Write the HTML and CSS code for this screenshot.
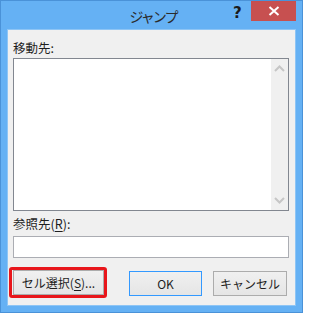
FILE: index.html
```html
<!DOCTYPE html>
<html lang="ja">
<head>
<meta charset="utf-8">
<link rel="stylesheet" href="styles.css">
</head>
<body>
<div class="window">
  <div class="titlebar">
    <div class="title">ジャンプ</div>
    <div class="help">?</div>
    <div class="close">
      <svg width="12" height="10" viewBox="0 0 12 10"><path d="M1.5 1 L10.5 9 M10.5 1 L1.5 9" stroke="#fff" stroke-width="2" fill="none"/></svg>
    </div>
  </div>
  <div class="content">
    <div class="label">移動先:</div>
    <div class="list">
      <div class="scroll">
        <svg width="11" height="7" viewBox="0 0 11 7"><path d="M1 6 L5.5 1.5 L10 6" stroke="#c6c6c6" stroke-width="2" fill="none"/></svg>
        <svg width="11" height="7" viewBox="0 0 11 7"><path d="M1 1 L5.5 5.5 L10 1" stroke="#c6c6c6" stroke-width="2" fill="none"/></svg>
      </div>
    </div>
    <div class="label label2">参照先(<u>R</u>):</div>
    <div class="textbox"></div>
    <div class="buttons">
      <div class="btn btn-cell">セル選択(<u>S</u>)...<span class="highlight"></span></div>
      <div class="btn btn-ok">OK</div>
      <div class="btn btn-cancel">キャンセル</div>
    </div>
  </div>
</div>
</body>
</html>
```
FILE: styles.css
```css
html, body {
  margin: 0;
  padding: 0;
}
body {
  font-family: "Noto Sans CJK JP", "Noto Sans", sans-serif;
  font-size: 12px;
  color: #1e1e1e;
}
.window {
  width: 303px;
  height: 313px;
  box-sizing: border-box;
  background: #65b1f4;
  border: 1px solid #4a92d8;
  display: flex;
  flex-direction: column;
}
.titlebar {
  height: 28px;
  position: relative;
  display: flex;
  align-items: center;
  justify-content: center;
}
.title {
  font-size: 14px;
  letter-spacing: -2px;
  color: #2b2b2b;
  margin-top: 1px;
  margin-left: 3px;
}
.help {
  position: absolute;
  left: 232px;
  top: 3px;
  font-family: "DejaVu Sans", sans-serif;
  font-weight: bold;
  font-size: 15px;
  color: #1b1b1b;
}
.close {
  position: absolute;
  left: 250px;
  top: 0;
  width: 45px;
  height: 20px;
  background: #c75050;
  display: flex;
  align-items: center;
  justify-content: center;
}
.content {
  margin: 0 6px 6px 6px;
  flex: 1;
  background: #f0f0f0;
  border: 1px solid #8ec5f5;
  box-sizing: border-box;
  padding: 7px 6px 0 5px;
  display: flex;
  flex-direction: column;
}
.label {
  height: 21px;
  line-height: 21px;
  font-size: 12.5px;
}
.list {
  height: 153px;
  box-sizing: border-box;
  border: 1px solid #828790;
  background: #fff;
  display: flex;
  justify-content: flex-end;
}
.scroll {
  width: 17px;
  background: #f0f0f0;
  display: flex;
  flex-direction: column;
  justify-content: space-between;
  align-items: center;
  padding: 6px 0 6px;
}
.label2 {
  height: 25px;
  line-height: 25px;
}
.textbox {
  height: 22px;
  box-sizing: border-box;
  border: 1px solid #abadb3;
  background: #fff;
}
.buttons {
  display: flex;
  margin-top: 12px;
}
.btn {
  height: 25px;
  box-sizing: border-box;
  border: 1px solid #acacac;
  background: linear-gradient(#f0f0f0, #e5e5e5);
  display: flex;
  align-items: center;
  justify-content: center;
  font-size: 12px;
  position: relative;
}
.btn-cell {
  width: 91px;
}
.btn-ok {
  width: 73px;
  margin-left: 25px;
  margin-top: 1px;
  border-color: #3399ff;
}
.btn-cancel {
  width: 74px;
  margin-left: 11px;
  margin-top: 1px;
}
.highlight {
  position: absolute;
  left: -5px;
  top: -4px;
  right: -4px;
  bottom: -4px;
  border: 3px solid #e8161b;
  border-radius: 3px;
}
u {
  text-decoration-thickness: 1px;
  text-underline-offset: 2px;
}
```
